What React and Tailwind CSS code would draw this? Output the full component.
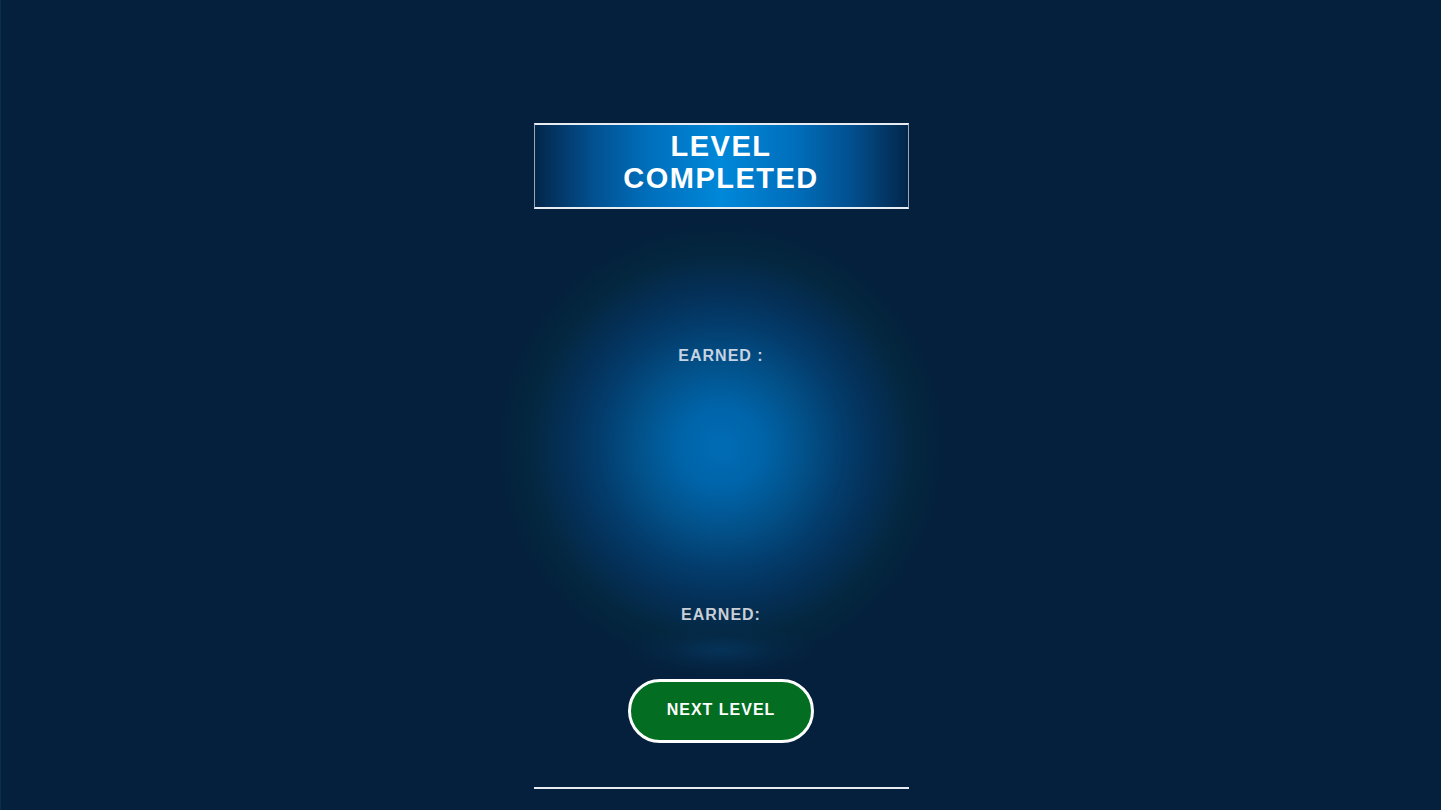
export default function App() {
  return (
    <div className="min-h-screen w-full bg-[#04203c] border-l border-[#0b2c4c] flex flex-col items-center font-['Liberation_Sans',Arial,sans-serif]">
      {/* title */}
      <div className="mt-[123px] w-[375px] h-[86px] pt-[5px] border-t-2 border-b-2 border-x border-t-[#e6ecf2] border-b-[#e6ecf2] border-x-[#9aa6b3] bg-[image:linear-gradient(to_right,#03264a_0%,#024f8e_15%,#006ebb_30%,#0088d9_50%,#006ebb_70%,#024f8e_85%,#03264a_100%)] text-center">
        <h1 className="text-white font-bold text-[29px] leading-[32px] tracking-[1.5px]">
          LEVEL
          <br />
          COMPLETED
        </h1>
      </div>

      {/* reward area with glow */}
      <div className="w-[460px] h-[470px] flex flex-col items-center bg-[image:radial-gradient(ellipse_95px_26px_at_50%_441px,rgba(6,56,100,0.7)_0%,rgba(5,44,80,0.4)_55%,rgba(4,32,60,0)_100%),radial-gradient(circle_225px_at_50%_238px,#006cb5_0%,#0064a9_18%,#02528b_36%,#033d6d_54%,#042f56_70%,#04273f_86%,rgba(4,32,60,0)_100%)]">
        <p className="mt-[135px] text-[16px] leading-[24px] font-bold tracking-[1px] text-[#c6d4e3]">
          EARNED :
        </p>
        <p className="mt-[235px] text-[16px] leading-[24px] font-bold tracking-[1px] text-[#c9cfd7]">
          EARNED:
        </p>
      </div>

      <button className="w-[186px] h-[64px] pb-[2px] rounded-full border-[3px] border-white bg-[#036d22] text-white font-bold text-[16px] tracking-[1px]">
        NEXT LEVEL
      </button>

      <div className="mt-[44px] w-[375px] h-[2px] bg-[#e6ecf2]" />
    </div>
  );
}
